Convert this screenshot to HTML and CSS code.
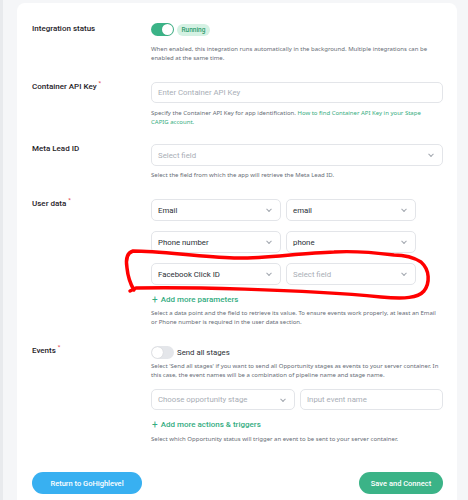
FILE: index.html
```html
<!DOCTYPE html>
<html>
<head>
<meta charset="utf-8">
<link rel="stylesheet" href="styles.css">
</head>
<body>
<div class="page">
  <div class="card">
    <div class="row r1">
      <div class="label">Integration status</div>
      <div class="ctrl">
        <div class="toggle-line">
          <span class="toggle on"><span class="knob"></span></span>
          <span class="badge">Running</span>
        </div>
        <p class="desc d1">When enabled, this integration runs automatically in the background. Multiple integrations can be<br>enabled at the same time.</p>
      </div>
    </div>

    <div class="row r2">
      <div class="label">Container API Key<sup class="req">*</sup></div>
      <div class="ctrl">
        <div class="field input"><span class="ph">Enter Container API Key</span></div>
        <p class="desc d2">Specify the Container API Key for app identification. <span class="link">How to find Container API Key in your Stape<br>CAPIG account.</span></p>
      </div>
    </div>

    <div class="row r3">
      <div class="label">Meta Lead ID</div>
      <div class="ctrl">
        <div class="field select"><span class="ph">Select field</span><span class="chev"></span></div>
        <p class="desc d3">Select the field from which the app will retrieve the Meta Lead ID.</p>
      </div>
    </div>

    <div class="row r4">
      <div class="label">User data<sup class="req">*</sup></div>
      <div class="ctrl">
        <div class="pairs">
          <div class="pair">
            <div class="field select"><span class="val">Email</span><span class="chev"></span></div>
            <div class="field select"><span class="val">email</span><span class="chev"></span></div>
          </div>
          <div class="pair">
            <div class="field select"><span class="val">Phone number</span><span class="chev"></span></div>
            <div class="field select"><span class="val">phone</span><span class="chev"></span></div>
          </div>
          <div class="pair">
            <div class="field select"><span class="val">Facebook Click ID</span><span class="chev"></span></div>
            <div class="field select"><span class="ph">Select field</span><span class="chev"></span></div>
          </div>
        </div>
        <div class="add a1"><span class="plus">+</span>Add more parameters</div>
        <p class="desc d4">Select a data point and the field to retrieve its value. To ensure events work properly, at least an Email<br>or Phone number is required in the user data section.</p>
      </div>
    </div>

    <div class="row r5">
      <div class="label">Events<sup class="req">*</sup></div>
      <div class="ctrl">
        <div class="toggle-line">
          <span class="toggle off"><span class="knob"></span></span>
          <span class="toggle-text">Send all stages</span>
        </div>
        <p class="desc d5">Select 'Send all stages' if you want to send all Opportunity stages as events to your server container. In<br>this case, the event names will be a combination of pipeline name and stage name.</p>
        <div class="event-row">
          <div class="field select stage"><span class="ph">Choose opportunity stage</span><span class="chev"></span></div>
          <div class="field input ev"><span class="ph">Input event name</span></div>
        </div>
        <div class="add a2"><span class="plus">+</span>Add more actions &amp; triggers</div>
        <p class="desc d6">Select which Opportunity status will trigger an event to be sent to your server container.</p>
      </div>
    </div>

    <div class="actions">
      <button class="btn blue">Return to GoHighlevel</button>
      <button class="btn green">Save and Connect</button>
    </div>
  </div>
</div>
<svg class="scribble" width="468" height="500" viewBox="0 0 468 500">
  <path d="M 130 291 L 136 288 C 180 287, 300 289, 381 297 C 405 299, 418 298, 424 291 C 430 283, 430 270, 421 262 C 410 255, 400 255, 394 255 C 370 252, 350 251, 334 252 C 300 253, 260 259, 234 258 C 200 257, 160 251, 133 251 C 126 253, 126 262, 127 268 C 128 278, 131 285, 134 290" fill="none" stroke="#ff0000" stroke-width="3.5" stroke-linecap="round" stroke-linejoin="round"/>
</svg>
</body>
</html>
```

FILE: styles.css
```css
* { box-sizing: border-box; }
html, body { margin: 0; padding: 0; }
body {
  width: 468px;
  height: 500px;
  overflow: hidden;
  background: #f5f6f8;
  font-family: Roboto, "Noto Sans", sans-serif;
  color: #23272e;
  position: relative;
}
.page {
  border-left: 3px solid #e8eaed;
  padding: 3px 11px 0 14px;
  height: 500px;
}
.card {
  background: #fff;
  border-radius: 8px 8px 0 0;
  padding: 20px 14px 0 15px;
  height: 497px;
}
.row {
  display: grid;
  grid-template-columns: 119px 1fr;
}
.label {
  font-size: 8px;
  font-weight: 500;
  line-height: 10px;
  color: #1f2329;
}
.req {
  color: #e5484d;
  font-size: 6px;
  vertical-align: top;
  position: relative;
  top: -2px;
  margin-left: 2px;
  line-height: 6px;
}
.r1 { margin-bottom: 20px; }
.r2 { margin-bottom: 18px; }
.r3 { margin-bottom: 19.5px; }
.r4 { margin-bottom: 20px; }
.r1 .label { margin-top: 1px; }

.toggle-line {
  display: flex;
  align-items: center;
  height: 13px;
  gap: 3px;
}
.toggle {
  width: 23px;
  height: 13px;
  border-radius: 7px;
  display: flex;
  align-items: center;
  padding: 1px;
}
.toggle .knob {
  width: 11px;
  height: 11px;
  border-radius: 50%;
  background: #fff;
  box-shadow: 0 0 1px rgba(0,0,0,0.2);
}
.toggle.on { background: #3bb387; justify-content: flex-end; }
.toggle.off { background: #e4e6ea; justify-content: flex-start; }
.badge {
  background: #d4f1e3;
  color: #2d9c6d;
  font-size: 6.5px;
  font-weight: 500;
  height: 12px;
  line-height: 12px;
  padding: 0 4.5px;
  border-radius: 6px;
}
.toggle-text {
  font-size: 7.8px;
  color: #2b2f36;
}

.desc {
  margin: 0;
  font-family: "Noto Sans", Roboto, sans-serif;
  font-size: 6px;
  line-height: 8.5px;
  color: #666c75;
  white-space: nowrap;
}
.link { color: #34ad80; }
.d1 { margin-top: 9px; }
.d2 { margin-top: 6px; }
.d3 { margin-top: 5px; }
.d4 { margin-top: 4px; }
.d5 { margin-top: 3px; }
.d6 { margin-top: 4.5px; }

.field {
  position: relative;
  height: 21px;
  border: 1px solid #e3e5e9;
  border-radius: 5px;
  background: #fff;
  display: flex;
  align-items: center;
  padding: 0 6px;
  font-size: 7.8px;
}
.select { height: 22px; }
.ph { color: #a9aeb6; }
.val { color: #2b2f36; }
.chev {
  position: absolute;
  right: 9px;
  top: 50%;
  width: 4px;
  height: 4px;
  border-right: 1px solid #a3a8b0;
  border-bottom: 1px solid #a3a8b0;
  transform: translateY(-70%) rotate(45deg);
}

.pairs {
  display: flex;
  flex-direction: column;
  gap: 10px;
  width: 265px;
}
.pair {
  display: grid;
  grid-template-columns: 130px 130px;
  gap: 5px;
}
.add {
  color: #33ac7f;
  font-size: 8px;
  font-weight: 500;
  line-height: 11px;
  display: flex;
  align-items: center;
}
.plus {
  font-size: 10px;
  margin-right: 3px;
  font-weight: 400;
  margin-left: 1px;
}
.a1 { margin-top: 9px; }
.a2 { margin-top: 9px; }

.event-row {
  margin-top: 10px;
  display: grid;
  grid-template-columns: 144px 1fr;
  gap: 5px;
}
.event-row .field { height: 21px; }

.actions {
  display: flex;
  justify-content: space-between;
  margin-top: 29px;
}
.btn {
  border: none;
  height: 22px;
  border-radius: 11px;
  color: #fff;
  font-family: Roboto, "Noto Sans", sans-serif;
  font-size: 7.5px;
  font-weight: 500;
  padding: 0;
}
.btn.blue { background: #38b0f1; width: 110px; }
.btn.green { background: #3bb387; width: 84px; }

.scribble {
  position: absolute;
  left: 0;
  top: 0;
  pointer-events: none;
}
```
